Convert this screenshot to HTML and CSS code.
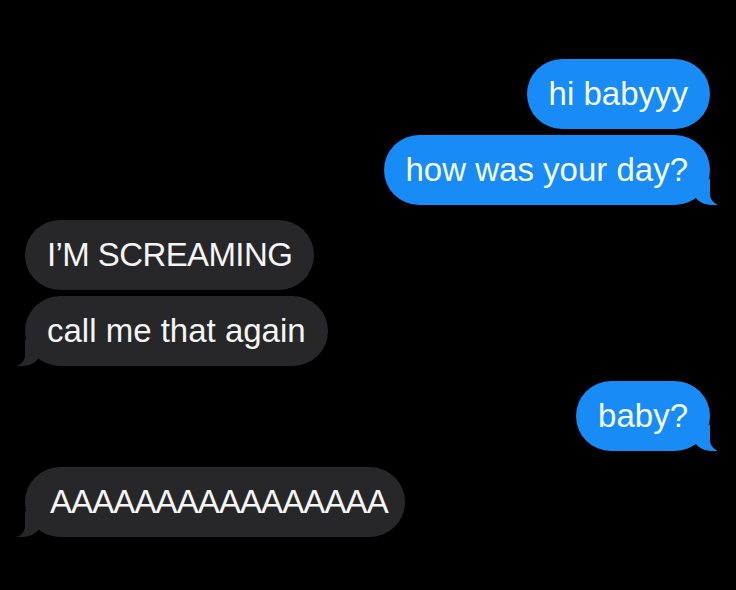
FILE: index.html
```html
<!DOCTYPE html>
<html lang="en">
<head>
<meta charset="utf-8">
<title>Messages</title>
<link rel="stylesheet" href="styles.css">
</head>
<body>
<main class="thread">
  <section class="group sent">
    <div class="bubble">hi babyyy</div>
    <div class="bubble tail">how was your day?</div>
  </section>
  <section class="group received">
    <div class="bubble caps">I’M SCREAMING</div>
    <div class="bubble tail">call me that again</div>
  </section>
  <section class="group sent">
    <div class="bubble tail">baby?</div>
  </section>
  <section class="group received last">
    <div class="bubble tail caps wide">AAAAAAAAAAAAAAAA</div>
  </section>
</main>
</body>
</html>
```
FILE: styles.css
```css
html, body {
  margin: 0;
  padding: 0;
  background: #000;
}

body {
  width: 736px;
  height: 590px;
  overflow: hidden;
  font-family: "Liberation Sans", Arial, sans-serif;
}

.thread {
  display: flex;
  flex-direction: column;
  gap: 15px;
  padding: 59px 26px 0 25px;
}

.group {
  display: flex;
  flex-direction: column;
  gap: 6px;
}

.group.last {
  margin-top: 1px;
}

.group.sent {
  align-items: flex-end;
}

.group.received {
  align-items: flex-start;
}

.bubble {
  position: relative;
  font-size: 33px;
  line-height: 38px;
  padding: 16px 22px 16px 22px;
  border-radius: 35px;
  color: #fff;
  white-space: nowrap;
}

.sent .bubble {
  background: #188bf6;
  color: #f4fbff;
}

.received .bubble {
  background: #272729;
  color: #f5f5f5;
}

.caps {
  letter-spacing: -0.6px;
}

.wide {
  letter-spacing: -0.9px;
  padding-left: 25px;
  padding-right: 17px;
}

.tail::before,
.tail::after {
  content: "";
  position: absolute;
  bottom: 0;
  height: 26px;
}

.sent .tail::before {
  right: -7px;
  width: 24px;
  background: #188bf6;
  border-bottom-left-radius: 18px 15px;
}

.sent .tail::after {
  right: -26px;
  width: 26px;
  background: #000;
  border-bottom-left-radius: 11px;
}

.received .tail::before {
  left: -8px;
  width: 24px;
  background: #272729;
  border-bottom-right-radius: 18px 15px;
}

.received .tail::after {
  left: -26px;
  width: 26px;
  background: #000;
  border-bottom-right-radius: 11px;
}
```
